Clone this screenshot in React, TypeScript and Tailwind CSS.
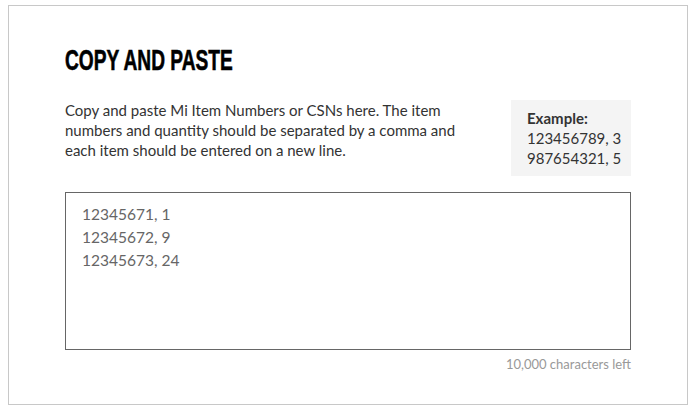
export default function App() {
  return (
    <div className="h-[410px] w-[693px] bg-white pl-2 pr-[5px] pt-[5px] pb-[5px]" style={{ fontFamily: 'Lato, "Open Sans", sans-serif' }}>
      <div className="h-[400px] border border-[#c8c8c8] bg-white pl-[56px] pr-[56px] pt-[40px]">
        <h1
          className="origin-left scale-x-[0.66] whitespace-nowrap text-[29px] font-black uppercase leading-none text-black [-webkit-text-stroke:0.6px_black]"
          style={{ fontFamily: '"Liberation Sans", Arial, sans-serif' }}
        >
          Copy and Paste
        </h1>
        <div className="mt-[25px] flex items-start justify-between">
          <p className="w-[410px] text-[15px] leading-[20px] text-[#333]">
            Copy and paste Mi Item Numbers or CSNs here. The item numbers and quantity should be separated by a comma and
            each item should be entered on a new line.
          </p>
          <div className="w-[120px] whitespace-nowrap bg-[#f4f4f4] pl-4 pr-2 pt-[8px] pb-[8px] text-[15px] leading-[20px] text-[#333]">
            <div className="font-bold">Example:</div>
            <div>123456789, 3</div>
            <div>987654321, 5</div>
          </div>
        </div>
        <div className="mt-[16px] h-[158px] border border-[#666] px-4 pt-[10px] text-[15.5px] leading-[23px] text-[#666]">
          <div>12345671, 1</div>
          <div>12345672, 9</div>
          <div>12345673, 24</div>
        </div>
        <div className="mt-[6px] text-right text-[13px] leading-[16px] text-[#999]">10,000 characters left</div>
      </div>
    </div>
  )
}
